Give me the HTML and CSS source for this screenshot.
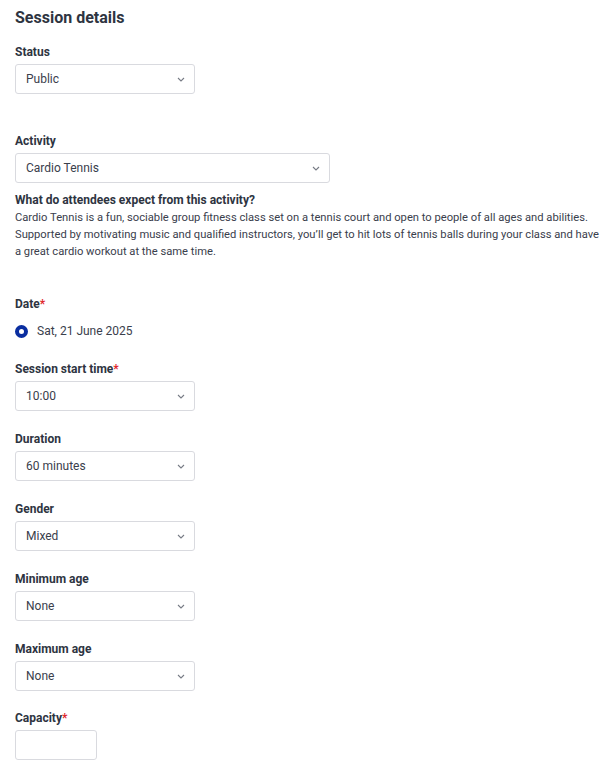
FILE: index.html
```html
<!DOCTYPE html>
<html lang="en">
<head>
<meta charset="utf-8">
<title>Session details</title>
<link rel="stylesheet" href="styles.css">
</head>
<body>
<div class="page">
  <h2 class="title">Session details</h2>

  <div class="field f-status">
    <label class="label">Status</label>
    <div class="select w-180"><span>Public</span><svg class="chev" viewBox="0 0 8 5" width="8" height="5"><path d="M1 1l3 3 3-3" fill="none" stroke="#777b85" stroke-width="1.1"/></svg></div>
  </div>

  <div class="field f-activity">
    <label class="label">Activity</label>
    <div class="select w-315"><span>Cardio Tennis</span><svg class="chev" viewBox="0 0 8 5" width="8" height="5"><path d="M1 1l3 3 3-3" fill="none" stroke="#777b85" stroke-width="1.1"/></svg></div>
  </div>

  <div class="about">
    <h3 class="about-title">What do attendees expect from this activity?</h3>
    <p class="about-text">Cardio Tennis is a fun, sociable group fitness class set on a tennis court and open to people of all ages and abilities. Supported by motivating music and qualified instructors, you’ll get to hit lots of tennis balls during your class and have a great cardio workout at the same time.</p>
  </div>

  <div class="field f-date">
    <label class="label">Date<span class="req">*</span></label>
    <div class="radio-row"><span class="radio"></span><span>Sat, 21 June 2025</span></div>
  </div>

  <div class="field f-first">
    <label class="label">Session start time<span class="req">*</span></label>
    <div class="select w-180"><span>10:00</span><svg class="chev" viewBox="0 0 8 5" width="8" height="5"><path d="M1 1l3 3 3-3" fill="none" stroke="#777b85" stroke-width="1.1"/></svg></div>
  </div>

  <div class="field">
    <label class="label">Duration</label>
    <div class="select w-180"><span>60 minutes</span><svg class="chev" viewBox="0 0 8 5" width="8" height="5"><path d="M1 1l3 3 3-3" fill="none" stroke="#777b85" stroke-width="1.1"/></svg></div>
  </div>

  <div class="field">
    <label class="label">Gender</label>
    <div class="select w-180"><span>Mixed</span><svg class="chev" viewBox="0 0 8 5" width="8" height="5"><path d="M1 1l3 3 3-3" fill="none" stroke="#777b85" stroke-width="1.1"/></svg></div>
  </div>

  <div class="field">
    <label class="label">Minimum age</label>
    <div class="select w-180"><span>None</span><svg class="chev" viewBox="0 0 8 5" width="8" height="5"><path d="M1 1l3 3 3-3" fill="none" stroke="#777b85" stroke-width="1.1"/></svg></div>
  </div>

  <div class="field">
    <label class="label">Maximum age</label>
    <div class="select w-180"><span>None</span><svg class="chev" viewBox="0 0 8 5" width="8" height="5"><path d="M1 1l3 3 3-3" fill="none" stroke="#777b85" stroke-width="1.1"/></svg></div>
  </div>

  <div class="field f-cap">
    <label class="label">Capacity<span class="req">*</span></label>
    <div class="input w-82"></div>
  </div>
</div>
</body>
</html>
```

FILE: styles.css
```css
* { box-sizing: border-box; }
html, body { margin: 0; padding: 0; background: #fff; }
body {
  font-family: Roboto, "Noto Sans", "Liberation Sans", sans-serif;
  color: #3a404c;
  font-size: 12px;
}
.page {
  padding: 8px 4px 0 15px;
  display: flex;
  flex-direction: column;
}
.title {
  margin: 0;
  font-size: 16px;
  line-height: 20px;
  font-weight: 700;
  color: #2e3441;
}
.field {
  display: flex;
  flex-direction: column;
  align-items: flex-start;
  margin-top: 20px;
}
.f-status { margin-top: 16px; }
.f-activity { margin-top: 39px; }
.f-date { margin-top: 36px; }
.f-first { margin-top: 22px; }
.f-cap { margin-top: 19px; }
.label {
  font-size: 12px;
  line-height: 16px;
  font-weight: 700;
  color: #2e3441;
  margin-bottom: 4px;
}
.req { color: #e0262b; }
.select, .input {
  height: 30px;
  border: 1px solid #d9dadf;
  border-radius: 3px;
  background: #fff;
  display: flex;
  align-items: center;
  justify-content: space-between;
  padding: 0 9px 0 10px;
  font-size: 12px;
  color: #3a404c;
}
.chev { display: block; margin-top: 1px; }
.w-180 { width: 180px; }
.w-315 { width: 315px; }
.w-82 { width: 82px; }
.about { margin-top: 9px; }
.about-title {
  margin: 0;
  font-size: 12px;
  line-height: 16px;
  font-weight: 700;
  color: #2e3441;
}
.about-text {
  margin: 1px 0 0 0;
  font-size: 11.2px;
  line-height: 17px;
  color: #3a404c;
}
.radio-row {
  display: flex;
  align-items: center;
  gap: 9px;
  height: 16px;
  margin-top: 7px;
  font-size: 12px;
  color: #3a404c;
}
.radio {
  width: 13px;
  height: 13px;
  border-radius: 50%;
  border: 4px solid #0a2ea0;
  background: #fff;
  flex: none;
}
```
